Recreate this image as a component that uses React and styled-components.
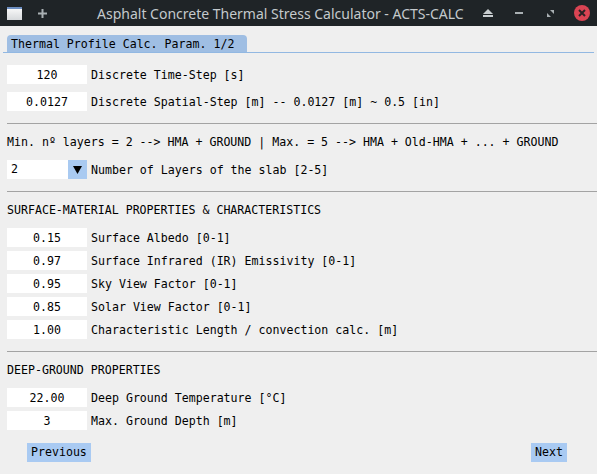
import React from "react";
import styled, { createGlobalStyle } from "styled-components";

const GlobalStyle = createGlobalStyle`
	html, body {
		margin: 0;
		padding: 0;
		background: #efefef;
	}
	body {
		width: 597px;
		height: 474px;
		overflow: hidden;
		font-family: "DejaVu Sans Mono", monospace;
		font-size: 11.6px;
		color: #000;
	}
`;

const Window = styled.div`
	width: 597px;
	height: 474px;
	display: flex;
	flex-direction: column;
	background: #efefef;
`;

const TitleBar = styled.div`
	height: 26px;
	background: #1f2427;
	display: flex;
	align-items: center;
	padding: 0 6px 0 7px;
	box-sizing: border-box;
	color: #c4c9cc;
`;

const TitleLeft = styled.div`
	display: flex;
	align-items: center;
	gap: 15px;
	width: 90px;
`;

const Title = styled.div`
	flex: 1;
	font-family: "Noto Sans", "Open Sans", sans-serif;
	font-size: 14px;
	white-space: nowrap;
`;

const TitleRight = styled.div`
	display: flex;
	align-items: center;
	gap: 15px;
`;

const IconBox = styled.div`
	width: ${({ w }) => w || 16}px;
	height: 16px;
	display: flex;
	align-items: center;
	justify-content: center;
`;

const TabStrip = styled.div`
	margin: 9px 3px 0 3px;
	padding-left: 4px;
	border-bottom: 1px solid #92b8e2;
	display: flex;
`;

const Tab = styled.div`
	width: 240px;
	height: 17px;
	line-height: 18px;
	background: #9fbee3;
	border-radius: 4px 4px 0 0;
	padding-left: 4px;
	box-sizing: border-box;
	white-space: nowrap;
`;

const Panel = styled.div`
	display: flex;
	flex-direction: column;
	padding-left: 7px;
`;

const Row = styled.div`
	display: flex;
	align-items: center;
	height: 19px;
	margin-top: ${({ top }) => top || 0}px;
	gap: 4px;
	white-space: nowrap;
`;

const Field = styled.div`
	width: 80px;
	height: 19px;
	background: #ffffff;
	display: flex;
	align-items: center;
	justify-content: center;
`;

const Combo = styled.div`
	width: 80px;
	height: 19px;
	display: flex;
	background: #ffffff;
`;

const ComboValue = styled.div`
	flex: 1;
	padding-left: 4px;
	line-height: 19px;
`;

const ComboButton = styled.div`
	width: 19px;
	height: 19px;
	background: #a9caf1;
	display: flex;
	align-items: center;
	justify-content: center;
`;

const Separator = styled.div`
	height: 1px;
	background: #a3a3a3;
	margin-top: ${({ top }) => top || 0}px;
`;

const TextLine = styled.div`
	height: 19px;
	line-height: 19px;
	margin-top: ${({ top }) => top || 0}px;
	white-space: nowrap;
`;

const Footer = styled.div`
	display: flex;
	justify-content: space-between;
	padding: 0 30px 0 27px;
	margin-top: 13px;
`;

const Button = styled.div`
	height: 19px;
	line-height: 19px;
	padding: 0 4px;
	background: #a9caf2;
`;

const ValueRow = ({ value, label, top }) => (
	<Row top={top}>
		<Field>{value}</Field>
		<span>{label}</span>
	</Row>
);

const App = () => {
	return (
		<>
			<GlobalStyle />
			<Window>
				<TitleBar>
					<TitleLeft>
						<IconBox w={15}>
							<svg width="15" height="13" viewBox="0 0 15 13">
								<defs>
									<linearGradient id="wg" x1="0" y1="0" x2="0" y2="1">
										<stop offset="0" stopColor="#fcfcfc" />
										<stop offset="1" stopColor="#d6d9dc" />
									</linearGradient>
								</defs>
								<rect x="0" y="0" width="15" height="13" fill="url(#wg)" />
								<rect x="0" y="0" width="15" height="2" fill="#6d8fc2" />
							</svg>
						</IconBox>
						<IconBox w={10}>
							<svg width="9" height="9" viewBox="0 0 9 9">
								<rect x="3.5" y="0" width="2" height="9" fill="#a9b0b3" />
								<rect x="0" y="3.5" width="9" height="2" fill="#a9b0b3" />
							</svg>
						</IconBox>
					</TitleLeft>
					<Title>Asphalt Concrete Thermal Stress Calculator - ACTS-CALC</Title>
					<TitleRight>
						<IconBox w={16}>
							<svg width="10" height="8" viewBox="0 0 10 8">
								<polygon points="5,0 10,5 0,5" fill="#c8cdd0" />
								<rect x="0" y="6" width="10" height="2" fill="#c8cdd0" />
							</svg>
						</IconBox>
						<IconBox w={16}>
							<svg width="8" height="2" viewBox="0 0 8 2">
								<rect x="0" y="0" width="8" height="2" fill="#a9b0b3" />
							</svg>
						</IconBox>
						<IconBox w={16}>
							<svg width="7" height="7" viewBox="0 0 7 7">
								<polygon points="0,3 0,7 4,7" fill="#a9b0b3" />
								<polygon points="3,0 7,0 7,4" fill="#a9b0b3" />
							</svg>
						</IconBox>
						<IconBox w={18}>
							<svg width="16" height="16" viewBox="0 0 16 16">
								<circle cx="8" cy="8" r="8" fill="#da4453" />
								<path d="M5 5 L11 11 M11 5 L5 11" stroke="#2a2225" strokeWidth="2" />
							</svg>
						</IconBox>
					</TitleRight>
				</TitleBar>

				<TabStrip>
					<Tab>Thermal Profile Calc. Param. 1/2</Tab>
				</TabStrip>

				<Panel>
					<ValueRow top={12} value="120" label="Discrete Time-Step [s]" />
					<ValueRow top={8} value="0.0127" label="Discrete Spatial-Step [m] -- 0.0127 [m] ~ 0.5 [in]" />

					<Separator top={12} />
					<TextLine top={9}>
						Min. nº layers = 2 --&gt; HMA + GROUND | Max. = 5 --&gt; HMA + Old-HMA + ... + GROUND
					</TextLine>
					<Row top={8}>
						<Combo>
							<ComboValue>2</ComboValue>
							<ComboButton>
								<svg width="9" height="8" viewBox="0 0 9 8">
									<polygon points="0,0 9,0 4.5,8" fill="#000" />
								</svg>
							</ComboButton>
						</Combo>
						<span>Number of Layers of the slab [2-5]</span>
					</Row>

					<Separator top={12} />
					<TextLine top={9}>SURFACE-MATERIAL PROPERTIES &amp; CHARACTERISTICS</TextLine>
					<ValueRow top={8} value="0.15" label="Surface Albedo [0-1]" />
					<ValueRow top={4} value="0.97" label="Surface Infrared (IR) Emissivity [0-1]" />
					<ValueRow top={4} value="0.95" label="Sky View Factor [0-1]" />
					<ValueRow top={4} value="0.85" label="Solar View Factor [0-1]" />
					<ValueRow top={4} value="1.00" label="Characteristic Length / convection calc. [m]" />

					<Separator top={12} />
					<TextLine top={9}>DEEP-GROUND PROPERTIES</TextLine>
					<ValueRow top={8} value="22.00" label="Deep Ground Temperature [°C]" />
					<ValueRow top={4} value="3" label="Max. Ground Depth [m]" />
				</Panel>

				<Footer>
					<Button>Previous</Button>
					<Button>Next</Button>
				</Footer>
			</Window>
		</>
	);
};

export default App;
